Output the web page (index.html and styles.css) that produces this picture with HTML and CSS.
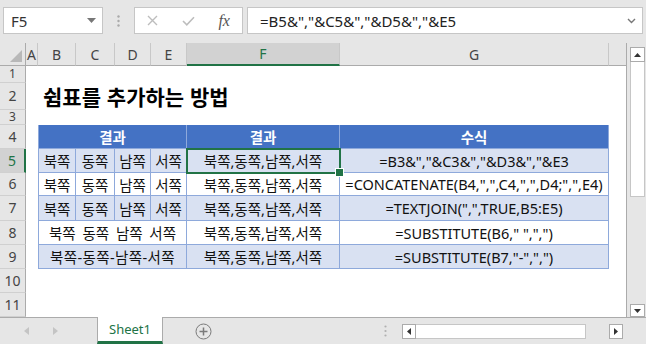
FILE: index.html
```html
<!DOCTYPE html>
<html lang="ko">
<head>
  <meta charset="UTF-8" />
  <meta name="viewport" content="width=device-width, initial-scale=1.0" />
  <title>쉼표를 추가하는 방법</title>
  <link rel="stylesheet" href="styles.css">
</head>
<body>
  <div class="app">

    <!-- Formula bar -->
    <div class="formula-bar">
      <div class="name-box">
        <span>F5</span>
        <svg width="9" height="5" viewBox="0 0 9 5"><polygon points="0,0 9,0 4.5,5" fill="#777"/></svg>
      </div>
      <div class="grip">
        <svg width="3" height="12" viewBox="0 0 3 12"><circle cx="1.5" cy="1.5" r="1.2" fill="#aaa"/><circle cx="1.5" cy="6" r="1.2" fill="#aaa"/><circle cx="1.5" cy="10.5" r="1.2" fill="#aaa"/></svg>
      </div>
      <div class="fx-box">
        <span><svg width="11" height="11" viewBox="0 0 11 11"><path d="M1 1 L10 10 M10 1 L1 10" stroke="#bdbdbd" stroke-width="1.4"/></svg></span>
        <span><svg width="13" height="10" viewBox="0 0 13 10"><path d="M1 5 L4.8 8.8 L12 1.2" stroke="#bdbdbd" stroke-width="1.6" fill="none"/></svg></span>
        <span class="fx">fx</span>
      </div>
      <div class="formula-input">
        <span>=B5&amp;","&amp;C5&amp;","&amp;D5&amp;","&amp;E5</span>
        <svg width="9" height="6" viewBox="0 0 9 6"><path d="M1 1 L4.5 4.5 L8 1" stroke="#777" stroke-width="1.4" fill="none"/></svg>
      </div>
    </div>

    <!-- Sheet -->
    <div class="sheet">
      <div class="grid">
        <div class="row col-heads">
          <div class="corner"><svg width="12" height="12" viewBox="0 0 12 12"><polygon points="12,0 12,12 0,12" fill="#b8b8b8"/></svg></div>
          <div class="ch">A</div>
          <div class="ch">B</div>
          <div class="ch">C</div>
          <div class="ch">D</div>
          <div class="ch">E</div>
          <div class="ch active">F</div>
          <div class="ch">G</div>
          <div class="ch blank"></div>
        </div>

        <div class="row h17"><div class="rh">1</div></div>

        <div class="row h27">
          <div class="rh">2</div>
          <div></div>
          <div class="title">쉼표를 추가하는 방법</div>
        </div>

        <div class="row h15"><div class="rh">3</div></div>

        <div class="row hd">
          <div class="rh">4</div>
          <div></div>
          <div class="c first span4">결과</div>
          <div class="c">결과</div>
          <div class="c">수식</div>
        </div>

        <div class="row band">
          <div class="rh active">5</div>
          <div></div>
          <div class="c first">북쪽</div>
          <div class="c">동쪽</div>
          <div class="c">남쪽</div>
          <div class="c">서쪽</div>
          <div class="c selected">북쪽,동쪽,남쪽,서쪽</div>
          <div class="c">=B3&amp;","&amp;C3&amp;","&amp;D3&amp;","&amp;E3</div>
        </div>

        <div class="row h23">
          <div class="rh">6</div>
          <div></div>
          <div class="c first">북쪽</div>
          <div class="c">동쪽</div>
          <div class="c">남쪽</div>
          <div class="c">서쪽</div>
          <div class="c">북쪽,동쪽,남쪽,서쪽</div>
          <div class="c">=CONCATENATE(B4,",",C4,",",D4;",",E4)</div>
        </div>

        <div class="row h25 band">
          <div class="rh">7</div>
          <div></div>
          <div class="c first">북쪽</div>
          <div class="c">동쪽</div>
          <div class="c">남쪽</div>
          <div class="c">서쪽</div>
          <div class="c">북쪽,동쪽,남쪽,서쪽</div>
          <div class="c">=TEXTJOIN(",",TRUE,B5:E5)</div>
        </div>

        <div class="row">
          <div class="rh">8</div>
          <div></div>
          <div class="c first span4 wide">북쪽 동쪽 남쪽 서쪽</div>
          <div class="c">북쪽,동쪽,남쪽,서쪽</div>
          <div class="c">=SUBSTITUTE(B6," ",",")</div>
        </div>

        <div class="row band">
          <div class="rh">9</div>
          <div></div>
          <div class="c first span4 dashed">북쪽-동쪽-남쪽-서쪽</div>
          <div class="c">북쪽,동쪽,남쪽,서쪽</div>
          <div class="c">=SUBSTITUTE(B7,"-",",")</div>
        </div>

        <div class="row"><div class="rh">10</div></div>
        <div class="row"><div class="rh">11</div></div>
      </div>

      <div class="vscroll">
        <div class="vs-btn"><svg width="7" height="4" viewBox="0 0 7 4"><polygon points="0,4 7,4 3.5,0" fill="#333"/></svg></div>
        <div class="vs-thumb"></div>
        <div class="vs-space"></div>
        <div class="vs-btn down"><svg width="7" height="4" viewBox="0 0 7 4"><polygon points="0,0 7,0 3.5,4" fill="#333"/></svg></div>
      </div>
    </div>

    <!-- Sheet tabs -->
    <div class="tabs">
      <div class="nav">
        <svg width="5" height="8" viewBox="0 0 5 8"><polygon points="5,0 5,8 0,4" fill="#c4c4c4"/></svg>
        <svg width="5" height="8" viewBox="0 0 5 8"><polygon points="0,0 0,8 5,4" fill="#c4c4c4"/></svg>
      </div>
      <div class="tab">Sheet1</div>
      <div class="add">
        <svg width="17" height="17" viewBox="0 0 17 17"><circle cx="8.5" cy="8.5" r="7.5" fill="none" stroke="#7a7a7a" stroke-width="1"/><path d="M8.5 4.5 V12.5 M4.5 8.5 H12.5" stroke="#7a7a7a" stroke-width="1.5"/></svg>
      </div>
      <div class="hdots">
        <svg width="3" height="12" viewBox="0 0 3 12"><circle cx="1.5" cy="1.5" r="1.1" fill="#b0b0b0"/><circle cx="1.5" cy="6" r="1.1" fill="#b0b0b0"/><circle cx="1.5" cy="10.5" r="1.1" fill="#b0b0b0"/></svg>
      </div>
      <div class="hscroll">
        <div class="hs-btn"><svg width="4" height="7" viewBox="0 0 4 7"><polygon points="4,0 4,7 0,3.5" fill="#333"/></svg></div>
        <div class="hs-thumb"></div>
        <div class="hs-track"></div>
        <div class="hs-btn"><svg width="4" height="7" viewBox="0 0 4 7"><polygon points="0,0 0,7 4,3.5" fill="#333"/></svg></div>
      </div>
    </div>

  </div>
</body>
</html>
```

FILE: styles.css
```css
* {
  box-sizing: border-box;
}

body {
  margin: 0;
  font-family: "Noto Sans", "Noto Sans CJK KR", sans-serif;
  background: #e6e6e6;
  color: #222;
}

.app {
  width: 646px;
  height: 344px;
  overflow: hidden;
  display: flex;
  flex-direction: column;
}

/* formula bar */
.formula-bar {
  height: 43px;
  flex-shrink: 0;
  display: flex;
  align-items: flex-start;
  padding: 7px 3px 0 3px;
}

.name-box {
  width: 100px;
  height: 27px;
  background: #fff;
  border: 1px solid #c6c6c6;
  display: flex;
  align-items: center;
  justify-content: space-between;
  padding: 0 6px 0 7px;
  font-size: 15px;
  color: #333;
}

.grip {
  width: 31px;
  height: 27px;
  display: flex;
  align-items: center;
  justify-content: center;
}

.fx-box {
  width: 109px;
  height: 27px;
  background: #fff;
  border: 1px solid #c6c6c6;
  display: flex;
}

.fx-box span {
  flex: 1;
  display: flex;
  align-items: center;
  justify-content: center;
}

.fx {
  font-family: "Liberation Serif", serif;
  font-style: italic;
  font-size: 16px;
  color: #555;
}

.formula-input {
  flex: 1;
  margin-left: 4px;
  height: 27px;
  background: #fff;
  border: 1px solid #c6c6c6;
  display: flex;
  align-items: center;
  justify-content: space-between;
  padding: 0 6px 0 12px;
  font-size: 15px;
  color: #222;
}

/* sheet */
.sheet {
  display: flex;
  height: 274px;
  flex-shrink: 0;
}

.grid {
  width: 627px;
  background: #fff;
  border-right: 1px solid #ababab;
}

.row {
  display: grid;
  grid-template-columns: 26px 12px 38px 39px 36px 36px 153px 269px 17px;
  height: 24px;
}

.h15 { height: 15px; }
.h17 { height: 17px; }
.h23 { height: 23px; }
.h25 { height: 25px; }
.h27 { height: 27px; }

.col-heads {
  height: 23px;
  background: #e6e6e6;
}

.corner {
  display: flex;
  align-items: flex-end;
  justify-content: flex-end;
  padding: 0 3px 3px 0;
  border-right: 1px solid #ababab;
  border-bottom: 1px solid #ababab;
}

.ch {
  display: flex;
  align-items: center;
  justify-content: center;
  font-size: 14px;
  color: #444;
  border-right: 1px solid #c8c8c8;
  border-bottom: 1px solid #ababab;
}

.ch.blank {
  border-right: none;
}

.ch.active {
  background: #d2d2d2;
  color: #217346;
  border-bottom: 2px solid #217346;
}

.rh {
  display: flex;
  align-items: center;
  justify-content: center;
  font-size: 14px;
  line-height: 1;
  color: #444;
  background: #e6e6e6;
  border-right: 1px solid #ababab;
  border-bottom: 1px solid #d0d0d0;
}

.h15 .rh,
.h17 .rh {
  font-size: 12px;
  line-height: 12px;
}

.rh.active {
  background: #d2d2d2;
  color: #217346;
  border-right: 2px solid #217346;
}

.title {
  grid-column: 3 / 10;
  padding-left: 5px;
  font-size: 21px;
  font-weight: 700;
  line-height: 27px;
  color: #000;
  font-family: "Noto Sans CJK KR", sans-serif;
}

/* table */
.c {
  display: flex;
  align-items: center;
  justify-content: center;
  font-size: 14.5px;
  white-space: nowrap;
  color: #111;
  border-right: 1px solid #8ea9db;
  border-bottom: 1px solid #8ea9db;
}

.c.first {
  border-left: 1px solid #8ea9db;
}

.span4 {
  grid-column: 3 / 7;
}

.wide {
  word-spacing: 3px;
}

.dashed {
  letter-spacing: 0.4px;
}

.band .c {
  background: #d9e1f2;
}

.hd .c {
  background: #4472c4;
  color: #fff;
  font-weight: 700;
}

.selected {
  position: relative;
}

.selected::after {
  content: "";
  position: absolute;
  top: -1px;
  left: -1px;
  right: -2px;
  bottom: -2px;
  border: 2px solid #217346;
}

.selected::before {
  content: "";
  position: absolute;
  right: -5px;
  bottom: -5px;
  width: 7px;
  height: 7px;
  background: #217346;
  border: 1px solid #fff;
  z-index: 2;
}

/* vertical scrollbar */
.vscroll {
  width: 19px;
  display: flex;
  flex-direction: column;
  padding: 4px 1px 0 3px;
}

.vs-btn {
  height: 15px;
  background: #fff;
  border: 1px solid #ababab;
  display: flex;
  align-items: center;
  justify-content: center;
}

.vs-btn.down {
  height: 13px;
}

.vs-thumb {
  height: 135px;
  background: #fff;
  border: 1px solid #c6c6c6;
  border-top: none;
}

.vs-space {
  flex: 1;
}

/* sheet tabs */
.tabs {
  flex: 1;
  display: flex;
  align-items: center;
  border-top: 1px solid #ababab;
}

.nav {
  width: 97px;
  display: flex;
  align-items: center;
  gap: 24px;
  padding-left: 24px;
}

.tab {
  align-self: flex-start;
  margin-top: -1px;
  width: 66px;
  height: 27px;
  background: #fff;
  border-left: 1px solid #ababab;
  border-right: 1px solid #ababab;
  border-bottom: 3px solid #217346;
  display: flex;
  align-items: center;
  justify-content: center;
  font-size: 13px;
  color: #217346;
}

.add {
  margin-left: 32px;
  display: flex;
}

.hdots {
  margin-left: 172px;
  display: flex;
}

.hscroll {
  margin-left: 15px;
  width: 221px;
  height: 15px;
  display: flex;
}

.hs-btn {
  width: 14px;
  background: #fff;
  border: 1px solid #ababab;
  display: flex;
  align-items: center;
  justify-content: center;
}

.hs-thumb {
  width: 170px;
  background: #fff;
  border: 1px solid #c6c6c6;
  border-left: none;
}

.hs-track {
  flex: 1;
}
```
